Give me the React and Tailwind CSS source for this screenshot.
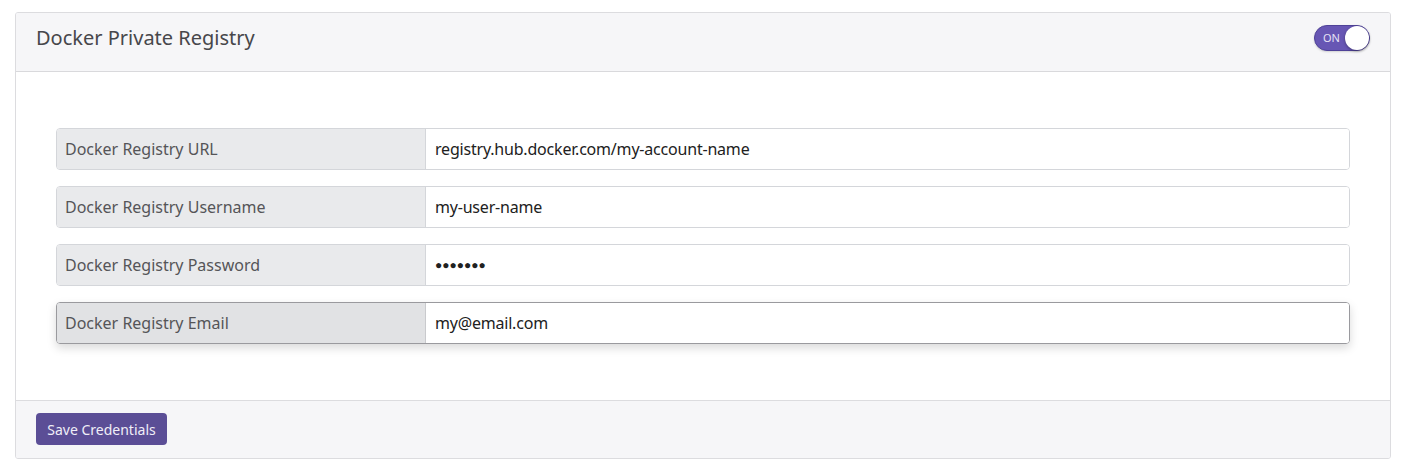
import React from "react";

const font = { fontFamily: '"Noto Sans", "Open Sans", sans-serif' };

function Row({ label, value, active, password }) {
  return (
    <div
      className={
        "flex h-[42px] rounded-[4px] border " +
        (active
          ? "border-[#9a9a9e] shadow-[0_4px_10px_rgba(0,0,0,0.15)]"
          : "border-[#d4d6da]")
      }
    >
      <div
        className={
          "flex w-[369px] shrink-0 items-center rounded-l-[3px] border-r pl-[8px] text-[16px] text-[#555558] " +
          (active ? "border-[#c9cacd] bg-[#e1e2e4]" : "border-[#d4d6da] bg-[#e9eaec]")
        }
      >
        {label}
      </div>
      <div className="flex flex-1 items-center rounded-r-[3px] bg-white pl-[9px] text-[16px] tracking-[-0.2px] text-[#212121]">
        {password ? <span className="text-[12px] tracking-[0px]">●●●●●●●</span> : value}
      </div>
    </div>
  );
}

export default function App() {
  return (
    <div className="bg-white pt-[12px] pb-[12px]" style={font}>
      <div className="ml-[15px] w-[1376px] overflow-hidden rounded-[3px] border border-[#dcdcdf]">
        <div className="flex h-[59px] items-center justify-between border-b border-[#d9d9dc] bg-[#f6f6f8] pl-[20px] pr-[20px] pb-[8px]">
          <div className="text-[20px] text-[#47474b]">Docker Private Registry</div>
          <div className="relative flex h-[26px] w-[56px] items-center rounded-full border border-[#4f4298] bg-[#6756b4] shadow-[0_1px_2px_rgba(0,0,0,0.15)]">
            <span className="pl-[8px] text-[11px] text-[#e6e2f5]">ON</span>
            <span className="absolute right-[0px] top-[0px] h-[24px] w-[24px] rounded-full bg-white shadow-[0_1px_3px_rgba(0,0,0,0.35)]" />
          </div>
        </div>
        <div className="flex flex-col gap-[16px] bg-white px-[40px] pt-[56px] pb-[56px]">
          <Row label="Docker Registry URL" value="registry.hub.docker.com/my-account-name" />
          <Row label="Docker Registry Username" value="my-user-name" />
          <Row label="Docker Registry Password" password />
          <Row label="Docker Registry Email" value="my@email.com" active />
        </div>
        <div className="h-[58px] border-t border-[#dcdcdf] bg-[#f6f6f8] pl-[20px] pt-[12px]">
          <button className="h-[32px] w-[131px] rounded-[4px] bg-[#5b4e96] text-[14px] text-[#f0eef8]">
            Save Credentials
          </button>
        </div>
      </div>
    </div>
  );
}
